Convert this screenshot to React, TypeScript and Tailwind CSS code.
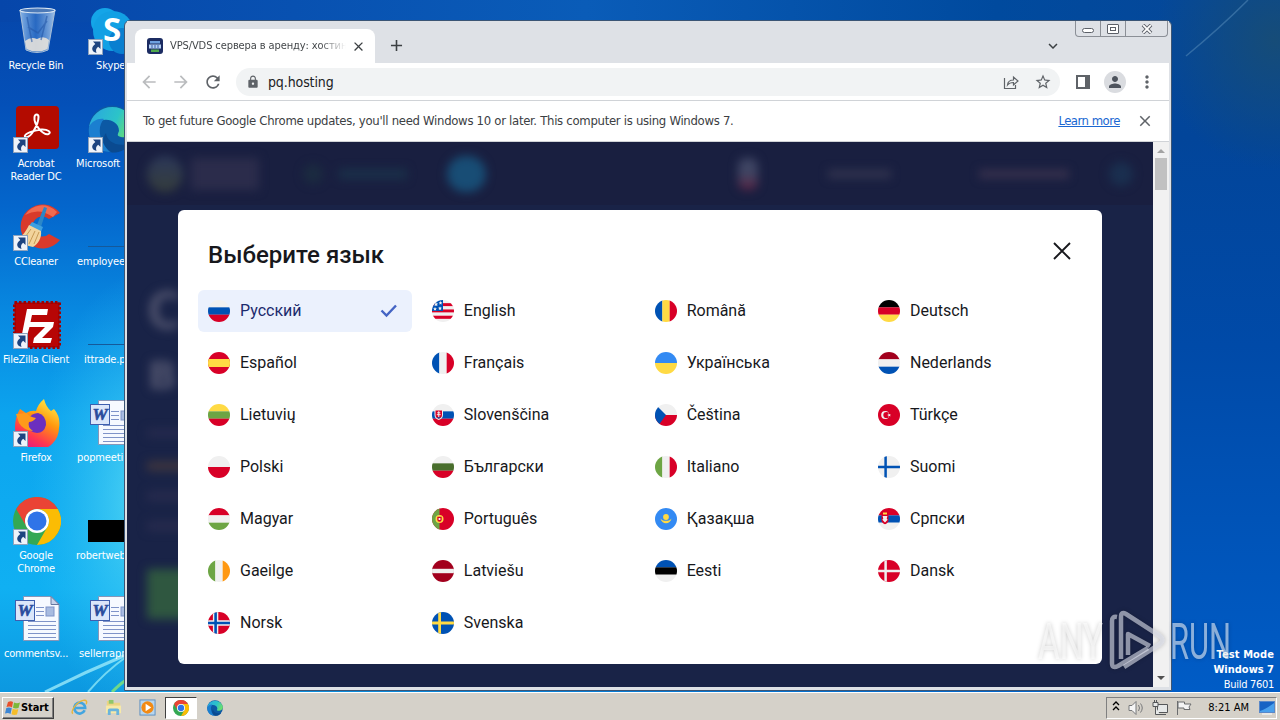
import React from 'react';
import {
  MdArrowBack,
  MdArrowForward,
  MdRefresh,
  MdLock,
  MdStarBorder,
  MdPerson,
  MdMoreVert,
  MdClose,
  MdAdd,
  MdKeyboardArrowDown,
} from 'react-icons/md';

const RED = '#d80027';
const BLUE = '#0052b4';
const WHITE = '#f0f0f0';
const YELLOW = '#ffda44';
const GREEN = '#6da544';
const SKY = '#338af3';
const MAROON = '#a2001d';

interface StripesProps {
  colors: string[];
  vertical?: boolean;
}

const Stripes: React.FC<StripesProps> = ({ colors, vertical }) => {
  const size = 22 / colors.length;
  return (
    <>
      {colors.map((color, i) =>
        vertical ? (
          <rect key={i} x={i * size} y="0" width={size + 0.1} height="22" fill={color} />
        ) : (
          <rect key={i} x="0" y={i * size} width="22" height={size + 0.1} fill={color} />
        )
      )}
    </>
  );
};

interface CrossProps {
  bg: string;
  outer: string;
  inner?: string;
  width?: number;
}

const Cross: React.FC<CrossProps> = ({ bg, outer, inner, width = 3 }) => (
  <>
    <rect width="22" height="22" fill={bg} />
    <path d="M7.6 0V22M0 11H22" stroke={outer} strokeWidth={width} />
    {inner && <path d="M7.6 0V22M0 11H22" stroke={inner} strokeWidth="2.6" />}
  </>
);

interface Language {
  name: string;
  flag: React.ReactNode;
}

const languages: Language[] = [
  { name: 'Русский', flag: <Stripes colors={[WHITE, BLUE, RED]} /> },
  {
    name: 'English',
    flag: (
      <>
        <Stripes colors={[WHITE, RED, WHITE, RED, WHITE, RED, WHITE]} />
        <rect width="11" height="11" fill={BLUE} />
        <g fill={WHITE}>
          <path d="M4 2l.7 1.4 1.5.2-1.1 1 .3 1.5L4 5.4l-1.4.7.3-1.5-1.1-1 1.5-.2z" />
          <path d="M8.5 1l.6 1.2 1.3.2-1 .9.3 1.3-1.2-.6-1.2.6.3-1.3-1-.9 1.3-.2z" />
          <path d="M3 7l.6 1.2 1.3.2-1 .9.3 1.3-1.2-.6-1.2.6.3-1.3-1-.9 1.3-.2z" />
          <path d="M8 6.4l.6 1.2 1.3.2-1 .9.3 1.3-1.2-.6-1.2.6.3-1.3-1-.9 1.3-.2z" />
        </g>
      </>
    ),
  },
  { name: 'Română', flag: <Stripes vertical colors={[BLUE, YELLOW, RED]} /> },
  { name: 'Deutsch', flag: <Stripes colors={['#000000', RED, YELLOW]} /> },
  {
    name: 'Español',
    flag: (
      <>
        <rect width="22" height="22" fill={RED} />
        <rect y="7" width="22" height="8" fill={YELLOW} />
      </>
    ),
  },
  { name: 'Français', flag: <Stripes vertical colors={[BLUE, WHITE, RED]} /> },
  { name: 'Українська', flag: <Stripes colors={[SKY, YELLOW]} /> },
  { name: 'Nederlands', flag: <Stripes colors={[MAROON, WHITE, BLUE]} /> },
  { name: 'Lietuvių', flag: <Stripes colors={[YELLOW, GREEN, RED]} /> },
  {
    name: 'Slovenščina',
    flag: (
      <>
        <Stripes colors={[WHITE, BLUE, RED]} />
        <path d="M2.5 5.5h8.5v5.5c0 3-2 4-4.25 5-2.25-1-4.25-2-4.25-5z" fill={WHITE} />
        <path d="M3.5 6.5h6.5v4.5c0 2.3-1.5 3-3.25 3.8C5 14 3.5 13.3 3.5 11z" fill={RED} />
        <path d="M6.75 7.2v6M5.2 8.8h3.1M4.8 10.7h3.9" stroke={WHITE} />
        <path d="M4.5 13.2h4.5l-2.25 1.5z" fill={BLUE} />
      </>
    ),
  },
  {
    name: 'Čeština',
    flag: (
      <>
        <Stripes colors={[WHITE, RED]} />
        <path d="M0 0L3 3L11 11L3 22H0z" fill={BLUE} />
      </>
    ),
  },
  {
    name: 'Türkçe',
    flag: (
      <>
        <rect width="22" height="22" fill={RED} />
        <circle cx="7.2" cy="11" r="4" fill={WHITE} />
        <circle cx="8.4" cy="11" r="3.1" fill={RED} />
        <path d="M10.5 9l.8 1.2 1.5-.3-.9 1.2.9 1.2-1.5-.4-.8 1.2v-1.5L9 11.1l1.5-.5z" fill={WHITE} />
      </>
    ),
  },
  { name: 'Polski', flag: <Stripes colors={[WHITE, RED]} /> },
  { name: 'Български', flag: <Stripes colors={[WHITE, '#496e2d', RED]} /> },
  { name: 'Italiano', flag: <Stripes vertical colors={[GREEN, WHITE, RED]} /> },
  { name: 'Suomi', flag: <Cross bg={WHITE} outer={BLUE} width={2.5} /> },
  { name: 'Magyar', flag: <Stripes colors={[RED, WHITE, GREEN]} /> },
  {
    name: 'Português',
    flag: (
      <>
        <rect width="22" height="22" fill={RED} />
        <rect width="7.5" height="22" fill={GREEN} />
        <circle cx="7.5" cy="11" r="4" fill={YELLOW} />
        <path d="M5.3 8.8h4.4v2.8a2.2 2.2 0 0 1-4.4 0z" fill={RED} />
        <rect x="6.6" y="10" width="1.8" height="2" fill={WHITE} />
      </>
    ),
  },
  {
    name: 'Қазақша',
    flag: (
      <>
        <rect width="22" height="22" fill={SKY} />
        <circle cx="11" cy="9" r="2.9" fill={YELLOW} />
        <path d="M5.5 10.5c.5 3 3 4.7 5.5 4.7s5-1.7 5.5-4.7c-1.5 2-3.5 2.3-5.5 2.3s-4-.3-5.5-2.3z" fill={YELLOW} />
      </>
    ),
  },
  {
    name: 'Српски',
    flag: (
      <>
        <Stripes colors={[RED, BLUE, WHITE]} />
        <path d="M3.5 7h7v5.5c0 2-1.8 3-3.5 3.8-1.7-.8-3.5-1.8-3.5-3.8z" fill={RED} />
        <path d="M5 4.5h4v2H5z" fill={YELLOW} />
        <path d="M4.6 8h4.8l-.7 2.5.9 1.3L7 14.5l-2.6-2.7.9-1.3z" fill={WHITE} />
      </>
    ),
  },
  { name: 'Gaeilge', flag: <Stripes vertical colors={[GREEN, WHITE, '#ff9811']} /> },
  {
    name: 'Latviešu',
    flag: (
      <>
        <rect width="22" height="22" fill={MAROON} />
        <rect y="8.8" width="22" height="4.4" fill={WHITE} />
      </>
    ),
  },
  { name: 'Eesti', flag: <Stripes colors={[BLUE, '#000000', WHITE]} /> },
  { name: 'Dansk', flag: <Cross bg={RED} outer={WHITE} width={2.5} /> },
  { name: 'Norsk', flag: <Cross bg={RED} outer={WHITE} inner={BLUE} width={5.4} /> },
  { name: 'Svenska', flag: <Cross bg={BLUE} outer={YELLOW} width={2.8} /> },
];

/* Desktop icons */

const RecycleBinIcon = () => (
  <svg viewBox="0 0 48 48" className="h-12 w-12">
    <defs>
      <linearGradient id="bin" x1="0" x2="1">
        <stop offset="0" stopColor="#9ec6ef" stopOpacity=".85" />
        <stop offset=".45" stopColor="#3f7fd0" stopOpacity=".6" />
        <stop offset="1" stopColor="#b8d4f0" stopOpacity=".85" />
      </linearGradient>
    </defs>
    <path d="M7 3L13 43Q24 48 35 43L42 3z" fill="url(#bin)" stroke="#a8bfd8" />
    <path d="M12 34q6-5 12-2 7-4 12 1l-1.5 9Q24 47 13.5 42z" fill="#e6e2dc" opacity=".9" />
    <path d="M14 10l5 25M34 9l-6 24M15 20l10 6 9-12" stroke="#2459a8" strokeWidth="1.5" fill="none" opacity=".6" />
    <ellipse cx="24.5" cy="3.5" rx="17.5" ry="2.5" fill="#4c7ab8" stroke="#dce8f4" strokeWidth="1.2" />
  </svg>
);

const AcrobatIcon = () => (
  <svg viewBox="0 0 48 48" className="h-12 w-12">
    <rect x="3" y="1" width="43" height="43" rx="4" fill="#b30b00" />
    <path
      d="M12 32c-2-3 9-7 16-7.5s11 3 7.5 4.5c-5 1.5-15-9-14-17 .4-3.5 4-3.5 4 0 0 7-8 22.5-13.5 20z"
      fill="none"
      stroke="#fff"
      strokeWidth="2"
      strokeLinejoin="round"
    />
  </svg>
);

const CCleanerIcon = () => (
  <svg viewBox="0 0 48 48" className="h-12 w-12">
    <path d="M47 10A22 22 0 1 0 47 37L36 31A10 10 0 1 1 36 16z" fill="#d93a2b" />
    <path d="M44 9A20 20 0 0 0 12 12q14-8 28 2z" fill="#f06a50" />
    <path d="M31 4l3 1-6 19-4-2z" fill="#2b87c8" />
    <path d="M19 19l11 5-2 5-12-6z" fill="#3da0e0" />
    <path d="M16 22l12 6c1 7-3 13-8 16-6-1-11-4-16-8 6-3 9-8 12-14z" fill="#f2d49c" />
    <path d="M18 26l-8 11M22 28l-6 13M26 29l-5 12" stroke="#c79a55" />
  </svg>
);

const FileZillaIcon = () => (
  <svg viewBox="0 0 48 48" className="h-12 w-12">
    <rect x="1.5" y="1.5" width="45" height="45" fill="#b30000" stroke="#a00000" strokeWidth="3" strokeDasharray="2.5 2" />
    <rect x="3" y="3" width="42" height="42" fill="#b70505" />
    <path d="M14 8h21l-1 6H19l-1.5 7H30l-1 5H16.5L13 38H8z" fill="#fff" />
    <path d="M24 21h17l-1 5-11 11h10l-1.5 5H20l1-5 11-11h-9z" fill="#fff" />
  </svg>
);

const FirefoxIcon = () => (
  <svg viewBox="0 0 48 48" className="h-12 w-12">
    <defs>
      <linearGradient id="fox" x1=".8" y1="0" x2=".3" y2="1">
        <stop offset="0" stopColor="#fff04a" />
        <stop offset=".4" stopColor="#ff980e" />
        <stop offset=".75" stopColor="#ff3750" />
        <stop offset="1" stopColor="#e31587" />
      </linearGradient>
    </defs>
    <path
      d="M7 10l6 4q5-3 10-2 2-7 8-12 2 8 7 12l3-2q7 8 5 19a22 22 0 0 1-44 0Q2 18 7 10z"
      fill="url(#fox)"
    />
    <path d="M15 20q4-6 10-6 8 2 8 12-2 8-9 8-8-1-9-7z" fill="#6b2fbf" />
    <path d="M3 15l11-1q2 4 9 5-3 4-7 4-2 5 4 9-10-1-14-8z" fill="#ff9a1a" />
  </svg>
);

const ChromeIcon = ({ className }: { className: string }) => (
  <svg viewBox="0 0 48 48" className={className}>
    <circle cx="24" cy="24" r="24" fill="#34a853" />
    <path d="M3.2 12A24 24 0 0 1 44.8 12H24A12 12 0 0 0 13.6 30z" fill="#ea4335" />
    <path d="M44.8 12A24 24 0 0 1 24 48L34.4 30A12 12 0 0 0 24 12z" fill="#fbbc04" />
    <circle cx="24" cy="24" r="12" fill="#fff" />
    <circle cx="24" cy="24" r="9.5" fill="#2f74e8" />
  </svg>
);

const WordIcon = () => (
  <svg viewBox="0 0 48 48" className="h-12 w-12">
    <path d="M10.5 1.5H38l8 8V45.5H10.5z" fill="#f6f9ff" stroke="#8696b8" />
    <path d="M38 1.5v8h8z" fill="#c6d2ea" stroke="#6678a0" />
    <path d="M23 12.5h8M23 16.5h8M23 20.5h8M15 26.5h28M15 30.5h28M15 34.5h28M15 38.5h28M15 42.5h28" stroke="#7f93c8" />
    <rect x="33" y="12" width="8" height="9" fill="#a8bbe0" stroke="#7f93c8" />
    <rect x="2.5" y="5.5" width="19" height="20" fill="#dbe6fa" stroke="#3e5fae" />
    <text x="12" y="21" textAnchor="middle" fontFamily="Liberation Serif, serif" fontSize="17" fontWeight="700" fontStyle="italic" fill="#2a4c9c" stroke="#2a4c9c" strokeWidth=".6">
      W
    </text>
  </svg>
);

const SkypeIcon = () => (
  <svg viewBox="0 0 48 48" className="h-12 w-12">
    <circle cx="17" cy="15" r="14" fill="#14a5e8" />
    <circle cx="25" cy="24" r="20" fill="#12a0e4" />
    <circle cx="34" cy="34" r="13" fill="#0a7fd0" />
    <text x="24" y="34" textAnchor="middle" fontFamily="Open Sans, sans-serif" fontSize="33" fontWeight="700" fill="#fff" className="[font-stretch:normal]">
      S
    </text>
  </svg>
);

const EdgeIcon = ({ className, id }: { className: string; id: string }) => (
  <svg viewBox="0 0 48 48" className={className}>
    <defs>
      <linearGradient id={id} x1="0" y1=".2" x2="1" y2=".5">
        <stop offset="0" stopColor="#2aa7e0" />
        <stop offset=".6" stopColor="#2cc4c8" />
        <stop offset="1" stopColor="#6de06a" />
      </linearGradient>
    </defs>
    <circle cx="24" cy="24" r="23.5" fill="#0c59a4" />
    <path d="M1 22A23.5 23.5 0 0 1 47.5 22C48 30 40 33 33 32c-5-1-3-3-2-6 0-8-8-12-15-11S2 20 1 22z" fill={`url(#${id})`} />
    <path d="M1 22c3-6 9-9 15-8-6 6-7 20 6 33C9 47-1 36 1 22z" fill="#1b7fd0" />
    <path d="M18 28c1 9 12 15 25 10-5 7-12 10-19 9.5C14 42 14 33 18 28z" fill="#0a4a90" />
  </svg>
);

const LineIcon = () => (
  <div className="flex h-12 w-12 items-end">
    <div className="mb-1 h-px w-12 bg-[#15599a]" />
  </div>
);

const BlackIcon = () => (
  <div className="flex h-12 w-12 items-center">
    <div className="mt-5 h-[22px] w-12 bg-black" />
  </div>
);

const ShortcutArrow = () => (
  <svg viewBox="0 0 15 16" className="absolute bottom-0 left-0 h-4 w-[15px]">
    <rect x=".5" y=".5" width="14" height="15" fill="#eef3fa" stroke="#8fa3bd" />
    <path d="M5 2.5h7.5V10l-2.300-2.300C8 9.500 7.500 11 8.500 14 3 12.500 3 8 7.300 5z" fill="#1d4480" />
  </svg>
);

interface DesktopItem {
  label: string;
  icon: React.ReactNode;
  shortcut?: boolean;
  align?: string;
}

const firstColumn: DesktopItem[] = [
  { label: 'Recycle Bin', icon: <RecycleBinIcon /> },
  { label: 'Acrobat Reader DC', icon: <AcrobatIcon />, shortcut: true },
  { label: 'CCleaner', icon: <CCleanerIcon />, shortcut: true },
  { label: 'FileZilla Client', icon: <FileZillaIcon />, shortcut: true },
  { label: 'Firefox', icon: <FirefoxIcon />, shortcut: true },
  { label: 'Google Chrome', icon: <ChromeIcon className="h-12 w-12" />, shortcut: true },
  { label: 'commentsv...', icon: <WordIcon /> },
];

const secondColumn: DesktopItem[] = [
  { label: 'Skype', icon: <SkypeIcon />, shortcut: true, align: 'pl-[21px]' },
  { label: 'Microsoft', icon: <EdgeIcon className="h-12 w-12" id="edge-desktop" />, shortcut: true, align: 'pl-[1px]' },
  { label: 'employee', icon: <LineIcon />, align: 'pl-[2px]' },
  { label: 'ittrade.p', icon: <LineIcon />, align: 'pl-[9px]' },
  { label: 'popmeetin', icon: <WordIcon />, align: 'pl-[2px]' },
  { label: 'robertweb', icon: <BlackIcon />, align: 'pl-[1px]' },
  { label: 'sellerrapr', icon: <WordIcon />, align: 'pl-[4px]' },
];

const DesktopColumn = ({ items }: { items: DesktopItem[] }) => (
  <div className="flex w-[75px] shrink-0 flex-col">
    {items.map((item) => (
      <div key={item.label} className="flex h-[98px] flex-col">
        <div className="relative ml-[13px] h-12 w-12">
          {item.icon}
          {item.shortcut && <ShortcutArrow />}
        </div>
        <div
          className={
            item.align
              ? `mt-1 whitespace-nowrap text-[11px] leading-[13px] tracking-[-0.1px] text-white ${item.align}`
              : 'mt-1 -ml-1 w-20 px-1 text-center text-[11px] leading-[13px] tracking-[-0.2px] text-white'
          }
        >
          {item.label}
        </div>
      </div>
    ))}
  </div>
);

const Wallpaper = () => (
  <svg viewBox="0 0 1280 692" className="absolute inset-0 h-full w-full" preserveAspectRatio="none">
    <defs>
      <linearGradient id="sky-left" x1="0" y1="0" x2="0" y2="1">
        <stop offset="0" stopColor="#0646aa" />
        <stop offset=".15" stopColor="#0450b8" />
        <stop offset=".3" stopColor="#0466cc" />
        <stop offset=".45" stopColor="#0888e0" />
        <stop offset=".6" stopColor="#0ca4ee" />
        <stop offset=".85" stopColor="#10b0f2" />
        <stop offset="1" stopColor="#0c98e0" />
      </linearGradient>
      <linearGradient id="sky-right" x1="0" y1="0" x2="0" y2="1">
        <stop offset="0" stopColor="#04489a" />
        <stop offset=".2" stopColor="#02459a" />
        <stop offset=".5" stopColor="#004aa8" />
        <stop offset="1" stopColor="#005cc6" />
      </linearGradient>
      <linearGradient id="sky-top" x1="0" y1="0" x2="1" y2="0">
        <stop offset="0" stopColor="#0646aa" />
        <stop offset=".5" stopColor="#0a5cb8" />
        <stop offset=".85" stopColor="#004a9e" />
        <stop offset="1" stopColor="#04489a" />
      </linearGradient>
      <linearGradient id="sky-bottom" x1="0" y1="0" x2="1" y2="0">
        <stop offset="0" stopColor="#0c98e0" />
        <stop offset="1" stopColor="#005cc6" />
      </linearGradient>
      <radialGradient id="glow">
        <stop offset="0" stopColor="#60e0f4" stopOpacity=".85" />
        <stop offset="1" stopColor="#30c0f4" stopOpacity="0" />
      </radialGradient>
      <radialGradient id="dusk">
        <stop offset="0" stopColor="#164c78" />
        <stop offset="1" stopColor="#164c78" stopOpacity="0" />
      </radialGradient>
    </defs>
    <rect width="640" height="692" fill="url(#sky-left)" />
    <rect x="640" width="640" height="692" fill="url(#sky-right)" />
    <rect width="1172" height="22" fill="url(#sky-top)" />
    <rect x="124" y="688" width="1048" height="4" fill="url(#sky-bottom)" />
    <ellipse cx="1275" cy="40" rx="120" ry="130" fill="url(#dusk)" />
    <ellipse cx="150" cy="500" rx="120" ry="230" fill="url(#glow)" />
    <path d="M45 692Q85 672 126 655" stroke="#9beafa" strokeWidth="3" fill="none" opacity=".8" />
    <path d="M88 692Q105 672 126 657" stroke="#8be6f6" strokeWidth="2" fill="none" opacity=".8" />
    <path d="M112 692Q120 684 126 680" stroke="#6fd88a" strokeWidth="3" fill="none" />
    <path d="M1186 56Q1220 28 1248 0" stroke="#4d84b4" strokeWidth="1.5" fill="none" opacity=".6" />
  </svg>
);

/* Browser window */

const WindowControls = () => (
  <div className="mr-px flex h-4 w-[93px] rounded-b border border-t-0 border-[#8b8f96]">
    <div className="flex w-[25px] items-center justify-center border-r border-[#8b8f96]">
      <div className="mt-1 h-[5px] w-3 rounded-sm border border-[#5c6068] bg-white" />
    </div>
    <div className="flex w-[25px] items-center justify-center border-r border-[#8b8f96]">
      <div className="flex h-[10px] w-3 items-center justify-center rounded-[1px] border border-[#5c6068] bg-white">
        <div className="h-1 w-1.5 border border-[#5c6068]" />
      </div>
    </div>
    <div className="flex flex-1 items-center justify-center">
      <svg viewBox="0 0 12 10" className="h-2.5 w-3">
        <path d="M2 1l8 8M10 1L2 9" stroke="#5c6068" strokeWidth="3.6" />
        <path d="M2.2 1.2l7.6 7.6M9.8 1.2L2.2 8.8" stroke="#fff" strokeWidth="1.8" />
      </svg>
    </div>
  </div>
);

const TabStrip = () => (
  <div className="flex h-[42px] justify-between bg-[#dee1e6]">
    <div className="flex items-end pl-2">
      <div className="flex h-[34px] w-60 items-center rounded-t-lg bg-white pl-3 pr-[9px]">
        <svg viewBox="0 0 16 16" className="h-4 w-4 shrink-0">
          <rect width="16" height="16" rx="3" fill="#1c2c62" />
          <path d="M3 3h10v2.5H3z" fill="#6ea0e0" />
          <path d="M2 6.5h12v4H2z" fill="#b4d0f4" />
          <path d="M5 7v3M8 7v3M11 7v3" stroke="#3a5fb0" />
          <path d="M4 11.5h8v2.5H4z" fill="#4fa84c" />
        </svg>
        <div className="ml-[7px] w-[176px] overflow-hidden whitespace-nowrap bg-gradient-to-r from-[#3c4043] from-85% to-transparent bg-clip-text text-[11px] leading-4 tracking-[-0.1px] text-transparent">
          VPS/VDS сервера в аренду: хостин
        </div>
        <MdClose className="ml-[5px] h-[15px] w-[15px] shrink-0 text-[#3c4043]" />
      </div>
      <MdAdd className="mb-2 ml-3 h-[19px] w-[19px] text-[#3c4043]" />
    </div>
    <div className="flex">
      <MdKeyboardArrowDown className="mr-[13px] mt-4 h-[18px] w-[18px] text-[#3c4043]" />
      <WindowControls />
    </div>
  </div>
);

const Toolbar = () => (
  <div className="flex h-[37px] items-center bg-white pl-[12px] pr-[12px]">
    <MdArrowBack className="h-[20px] w-[20px] text-[#babcbe]" />
    <MdArrowForward className="ml-[12px] h-[20px] w-[20px] text-[#babcbe]" />
    <MdRefresh className="ml-[12px] h-5 w-5 text-[#5f6368]" />
    <div className="ml-[13px] flex h-7 w-[825px] items-center rounded-full bg-[#f1f3f4] pl-[10px] pr-[8px]">
      <MdLock className="h-[14px] w-[14px] text-[#5f6368]" />
      <span className="ml-2 text-sm tracking-[-0.1px] text-[#202124]">pq.hosting</span>
      <svg viewBox="0 0 16 16" className="ml-auto h-4 w-4" fill="none" stroke="#5f6368" strokeWidth="1.2">
        <path d="M1.5 4v10.5h11V11" />
        <path d="M4.5 11q.5-5 6-5V3l4.5 4-4.5 4V8.5q-4 0-6 2.5z" />
      </svg>
      <MdStarBorder className="ml-[15px] h-[18px] w-[18px] text-[#5f6368]" />
    </div>
    <svg viewBox="0 0 14 14" className="ml-4 h-[14px] w-[14px]">
      <path d="M0 0h14v14H0z" fill="#5f6368" />
      <path d="M2 2h7v10H2z" fill="#fff" />
    </svg>
    <div className="ml-[14px] flex h-[22px] w-[22px] items-center justify-center rounded-full bg-[#dadce0]">
      <MdPerson className="h-[18px] w-[18px] text-[#4d535c]" />
    </div>
    <MdMoreVert className="ml-[11px] h-5 w-5 shrink-0 text-[#5f6368]" />
  </div>
);

const InfoBar = () => (
  <div className="flex h-[42px] items-center border-y border-[#d0d3d7] bg-white pl-4 pr-[15px] text-[13px] text-[#3c4043]">
    <span className="whitespace-nowrap tracking-[-0.3px]">
      To get future Google Chrome updates, you'll need Windows 10 or later. This computer is using Windows 7.
    </span>
    <span className="ml-auto whitespace-nowrap tracking-[-0.5px] text-[#1a67d2] underline">Learn more</span>
    <MdClose className="ml-4 h-[18px] w-[18px] text-[#5f6368]" />
  </div>
);

/* The page behind the dialog is dimmed and out of focus */
const PageBackdrop = () => (
  <div className="h-full overflow-hidden bg-[#192347]">
    <div className="flex h-[63px] items-center bg-[#191f40] pl-5 pr-5">
      <div className="flex items-center blur-[5px]">
        <div className="h-9 w-9 rounded-full bg-gradient-to-b from-[#2c3859] to-[#363d3b]" />
        <div className="ml-2 h-8 w-[68px] bg-[#2b2c4b]" />
        <div className="ml-11 h-5 w-5 rounded-full bg-[#1b2b40]" />
        <div className="ml-4 h-2.5 w-[68px] bg-[#1a3049]" />
      </div>
      <div className="ml-10 h-9 w-10 rounded-full bg-[#184d75] blur-[5px]" />
      <div className="ml-[252px] h-8 w-5 rounded-lg bg-gradient-to-b from-[#3f4563] from-50% to-[#5a1e40] blur-[5px]" />
      <div className="ml-[70px] h-2.5 w-16 bg-[#2d304c] blur-[4px]" />
      <div className="ml-[88px] h-2.5 w-[92px] bg-[#322e4b] blur-[4px]" />
      <div className="ml-10 h-6 w-6 rounded-full bg-[#1a2f4f] blur-[5px]" />
    </div>
    <div className="flex flex-col pl-5 pt-[76px] text-[52px] font-bold leading-[60px] text-[#4c506b] blur-[5px]">
      <span>С</span>
      <span>в</span>
      <div className="mt-7 h-2 w-20 bg-[#272b4e]" />
      <div className="mt-6 h-2.5 w-20 bg-[#3d353f]" />
      <div className="mt-5 h-2.5 w-20 bg-[#272b4e]" />
      <div className="mt-5 h-2.5 w-20 bg-[#272b4e]" />
      <div className="mt-[38px] h-[50px] w-40 bg-[#2f5740]" />
    </div>
  </div>
);

const cellStyle = (i: number) => {
  if (i === 0) return 'flex h-[42px] items-center rounded-md bg-[#ebf1fd] pl-[10px] pr-[14px] text-[#1c2b6d]';
  if (i % 4 === 1) return 'flex h-[42px] items-center pl-[10.5px]';
  return 'flex h-[42px] items-center pl-[10px]';
};

const LanguageDialog = () => (
  <div className="absolute left-[51px] top-[68px] h-[454px] w-[924px] rounded-md bg-white font-['Roboto',sans-serif] text-[#17181c] [font-stretch:normal]">
    <div className="flex h-20 items-start justify-between pl-[30px] pr-[31px] pt-[31px]">
      <h2 className="text-2xl font-medium leading-7">Выберите язык</h2>
      <svg viewBox="0 0 18 18" className="mt-[1px] h-[18px] w-[18px]">
        <path d="M1 1l16 16M17 1L1 17" stroke="#17181c" strokeWidth="1.9" />
      </svg>
    </div>
    <div className="grid grid-cols-4 gap-x-[9.3px] gap-y-[10px] px-5">
      {languages.map((lang, i) => (
        <div key={lang.name} className={cellStyle(i)}>
          <svg viewBox="0 0 22 22" className="h-[22px] w-[22px] shrink-0 overflow-hidden rounded-full">
            {lang.flag}
          </svg>
          <span className="ml-[10px] text-base leading-6">{lang.name}</span>
          {i === 0 && (
            <svg viewBox="0 0 18 14" className="ml-auto h-[14px] w-[18px]" fill="none">
              <path d="M1.5 6.5l5 5L16 1.5" stroke="#4464c4" strokeWidth="2.4" />
            </svg>
          )}
        </div>
      ))}
    </div>
  </div>
);

const Scrollbar = () => (
  <div className="flex w-4 flex-col items-center bg-[#f1f1f1]">
    <svg viewBox="0 0 8 4" className="mt-[7px] h-1 w-2">
      <path d="M0 4l4-4 4 4z" fill="#a3a3a3" />
    </svg>
    <div className="mt-[5px] h-8 w-3 bg-[#c1c1c1]" />
    <svg viewBox="0 0 8 4" className="mb-[7px] mt-auto h-1 w-2">
      <path d="M0 0l4 4 4-4z" fill="#505050" />
    </svg>
  </div>
);

const BrowserWindow = () => (
  <div className="absolute left-[124px] top-5 flex h-[671px] w-[1048px] flex-col rounded-t-md border border-[#3b5575] bg-[#dee1e6] px-[2px] pb-[3px]">
    <TabStrip />
    <Toolbar />
    <InfoBar />
    <div className="flex min-h-0 flex-1">
      <div className="relative min-w-0 flex-1">
        <PageBackdrop />
        <LanguageDialog />
      </div>
      <Scrollbar />
    </div>
  </div>
);

const Watermark = () => (
  <svg
    viewBox="0 0 200 66"
    className="absolute left-[1036px] top-[608px] h-[66px] w-[200px] overflow-visible drop-shadow-[0_0_2px_rgba(0,0,0,0.35)] [font-stretch:normal]"
  >
    <g fill="#fff" fillOpacity=".55" fontFamily="Roboto, sans-serif" fontSize="50" fontWeight="400">
      <text x="2" y="51" textLength="65" lengthAdjust="spacingAndGlyphs">
        ANY
      </text>
      <text x="134" y="51" textLength="61" lengthAdjust="spacingAndGlyphs">
        RUN
      </text>
    </g>
    <g fill="none" stroke="#dfe3ee" strokeOpacity=".6" strokeWidth="4.5" strokeLinejoin="round">
      <path d="M81 9q-5-1-5 4v42q0 6 6 3l30-18" />
      <path d="M92 47V26l22 12" />
      <path d="M85 51V9q0-6 5-3l34 22q5 4 0 8L88 59" />
    </g>
  </svg>
);

/* Taskbar */

const Taskbar = () => (
  <div className="flex h-[28px] items-center border-t border-white bg-[#d5d1c9] pl-[2px] pr-[3px]">
    <button className="mt-[2px] flex h-[22px] w-[52px] items-center border border-b-[#404040] border-l-white border-r-[#404040] border-t-white bg-[#d5d1c9] pl-[2px] text-[11px] font-bold tracking-[-0.1px] text-black shadow-[inset_-1px_-1px_#808080]">
      <svg viewBox="0 0 16 16" className="h-4 w-4 shrink-0">
        <path d="M3 2q3-1.5 5 0L7 7.5q-2-1.5-5.5-.5z" fill="#e8502c" />
        <path d="M9 2.5q3 1.5 6 0L13.5 8q-3 1-5.5-.3z" fill="#7cb83a" />
        <path d="M1.3 8q3-1 5.5.3L5.5 14q-2-1.5-5.5-.5z" fill="#3c86d4" />
        <path d="M7.7 8.8q3 1.5 5.6.2L12 14.5q-3 1-5.5-.3z" fill="#f5bd2a" />
      </svg>
      <span className="pt-px">Start</span>
    </button>
    <div className="mt-[2px] flex items-center pl-[17px]">
      <svg viewBox="0 0 18 18" className="h-[17px] w-[17px]" fill="none">
        <path d="M14.5 12A5.8 5.8 0 1 1 15 9.5H5" stroke="#42a5e0" strokeWidth="2.8" />
        <path d="M2 15.5C-1 13 6 3 13 1.5c4-.8 4 2 3 4" stroke="#e8b53a" strokeWidth="1.5" />
      </svg>
      <svg viewBox="0 0 18 18" className="ml-[17px] h-[17px] w-[17px]">
        <path d="M2 2h6l1 2h7v11H2z" fill="#ecd483" />
        <path d="M4 1h5v4H4z" fill="#8fc76a" />
        <path d="M1 7h16v8H1z" fill="#f7e9a8" />
        <path d="M3 17v-5q0-2 2-2h8q2 0 2 2v5h-3v-4H6v4z" fill="#6bb4dc" />
      </svg>
      <svg viewBox="0 0 18 18" className="ml-[17px] h-[17px] w-[17px]">
        <rect x="1" y="1" width="16" height="16" fill="#b8d6ee" stroke="#5c8fc0" />
        <circle cx="9" cy="9" r="6.5" fill="#f28a14" />
        <path d="M7 5l6 4-6 4z" fill="#fff" />
      </svg>
      <div className="ml-[9px] flex h-[22px] w-8 items-center justify-center border border-b-white border-l-[#404040] border-r-white border-t-[#404040] bg-white">
        <ChromeIcon className="h-4 w-4" />
      </div>
      <EdgeIcon className="ml-[10px] h-4 w-4" id="edge-taskbar" />
    </div>
    <div className="ml-auto mt-[2px] flex h-[22px] w-[171px] items-center border border-b-white border-l-[#808080] border-r-white border-t-[#808080] pl-[5px] pr-px">
      <svg viewBox="0 0 8 10" className="-mt-1 h-2.5 w-2" fill="none" stroke="#000" strokeWidth="1.3">
        <path d="M1 4l3-3 3 3M1 9l3-3 3 3" />
      </svg>
      <svg viewBox="0 0 16 16" className="ml-2 h-4 w-4" fill="#f6f6f6" stroke="#77787a">
        <path d="M1 5.5h3l4-4v13l-4-4H1z" />
        <path d="M10.5 5q2 3 0 6M12.5 3.5q3.5 4.5 0 9" fill="none" />
      </svg>
      <svg viewBox="0 0 16 16" className="ml-2 h-4 w-4" fill="#e6e8e8" stroke="#555759">
        <path d="M5.5 4.5h10v8h-10zM8 14.5h6" />
        <path d="M1 2.5h5v4H1zM2.5 0v2M4.5 0v2M3.5 6.5v8H8" />
      </svg>
      <svg viewBox="0 0 16 16" className="ml-2 h-4 w-4" fill="#f4f4f4" stroke="#6b6c6e">
        <path d="M1.5 1v14M2 2h6.5v2H15l-2 3 1 2.5H8V8H2z" />
      </svg>
      <span className="ml-auto whitespace-nowrap pt-px text-[11px] text-black">8:21 AM</span>
      <svg viewBox="0 0 16 14" className="ml-[10px] h-[14px] w-4">
        <rect x=".5" y=".5" width="15" height="11" fill="#1763c4" stroke="#5a88c8" />
        <path d="M1 10Q7 8 15 2v9H1z" fill="#4aa0ec" />
        <path d="M3 13h10" stroke="#fff" />
      </svg>
    </div>
  </div>
);

export default function App() {
  return (
    <div className="flex h-[720px] w-[1280px] flex-col overflow-hidden font-['DejaVu_Sans_Condensed','DejaVu_Sans',sans-serif] [font-stretch:condensed]">
      <main className="relative min-h-0 flex-1">
        <Wallpaper />
        <div className="relative flex pt-[7px]">
          <DesktopColumn items={firstColumn} />
          <DesktopColumn items={secondColumn} />
        </div>
        <BrowserWindow />
        <div className="absolute bottom-0 right-[6px] text-right text-[11px] leading-[15px] text-white">
          <div className="font-bold tracking-[0.1px]">Test Mode</div>
          <div className="font-bold">Windows 7</div>
          <div className="tracking-[-0.3px]">Build 7601</div>
        </div>
        <Watermark />
      </main>
      <Taskbar />
    </div>
  );
}
